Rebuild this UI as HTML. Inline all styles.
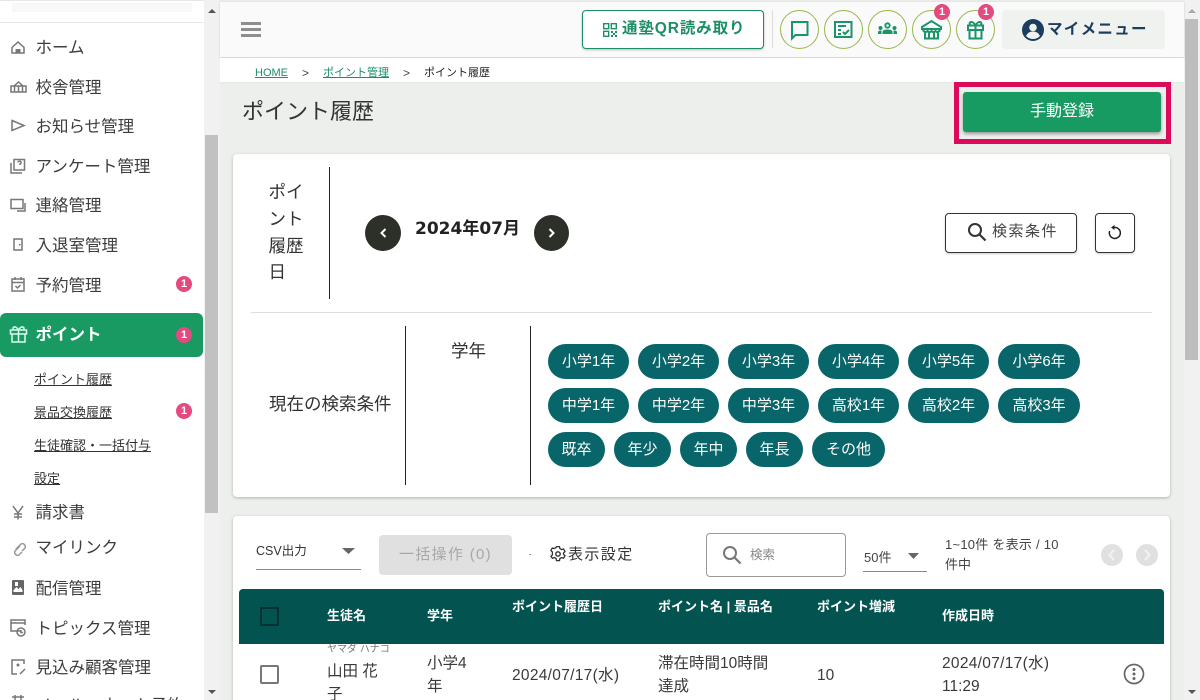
<!DOCTYPE html>
<html lang="ja"><head><meta charset="utf-8"><title>ポイント履歴</title>
<style>
html,body{margin:0;padding:0;width:1200px;height:700px;overflow:hidden;background:#edefec}
body{position:relative;font-family:"Liberation Sans","Noto Sans CJK JP",sans-serif;color:#333}
.t{position:absolute;white-space:nowrap;line-height:1}
.b{position:absolute;box-sizing:border-box}
svg{position:absolute;overflow:visible}
.n{font-size:16.5px;left:35.5px;color:#3d3d3d}
.s{font-size:13px;left:34px;color:#333;text-decoration:underline}
.bd{position:absolute;width:16px;height:16px;border-radius:50%;background:#e4497f;color:#fff;font-size:11px;font-weight:bold;line-height:16px;text-align:center}
.c{position:absolute;height:35px;border-radius:18px;background:#086569;color:#fff;font-size:15px;line-height:36px;text-align:center;white-space:nowrap}
.ci{position:absolute;top:10px;width:39px;height:39px;box-sizing:border-box;border-radius:50%;border:1px solid #96b84a;background:#fafafa}
.h{font-size:13px;font-weight:bold;color:#fff}
.r{font-size:15.5px;color:#3a3a3a}
.d{font-size:15.5px;color:#3a3a3a;letter-spacing:.3px}
.ic{fill:none;stroke:#777;stroke-width:1.5}
.gr{fill:none;stroke:#1b946a;stroke-width:2}
</style></head><body>

<!-- sidebar -->
<div class="b" style="left:0;top:0;width:204px;height:700px;background:#fff"></div>
<div class="b" style="left:0;top:0;width:220px;height:1px;background:#e6e6e6"></div>
<div class="b" style="left:12px;top:3px;width:180px;height:9px;background:#f8f8f8"></div>
<div class="b" style="left:0;top:22px;width:204px;height:1px;background:#e8e8e8"></div>
<div class="b" style="left:204px;top:0;width:16px;height:700px;background:#f1f1f1"></div>
<div class="b" style="left:205px;top:135px;width:13px;height:378px;background:#c1c1c1"></div>
<svg style="left:204px;top:0" width="16" height="700"><path d="M4 13l4-4 4 4z" fill="#555"/><path d="M4 690l4 4 4-4z" fill="#555"/></svg>

<svg style="left:0;top:0" width="30" height="700">
<path class="ic" d="M12 47.5l6-5.500 6 5.500v5.500h-12z"/><path d="M15.500 53v-4h5v4z" fill="#777"/>
<path class="ic" d="M11 92v-6h15v6zM14 86l4.500-4 4.500 4M18.500 86v6M14.500 86v6M22.500 86v6"/>
<path class="ic" d="M12 120.500l12 5-12 5z"/>
<path class="ic" d="M11 163v10h11"/><rect class="ic" x="14" y="159.500" width="10.500" height="10.500"/><path d="M18 162.500a1.500 1.500 0 1 1 2 1.500v1" class="ic" stroke-width="1"/>
<path class="ic" d="M11 199.500h12v9h-12zM25 203v8h-8"/>
<path class="ic" d="M14 239h8v11h-8z"/><path d="M19 244h1.500v1.500h-1.500z" fill="#777"/>
<rect class="ic" x="12" y="279" width="12" height="12"/><path class="ic" d="M12 282.500h12M15 277v3M21 277v3"/><path d="M15.500 286l2 2 3-3" class="ic" stroke-width="1"/>
<path class="ic" d="M13 506l5 7 5-7M18 513v6.500M14 514h8M14 517h8"/>
<path class="ic" d="M16 549l5-5a3 3 0 0 1 4 4l-3 3M20 546l-5 5a3 3 0 0 0 4 4l3-3" style="stroke:#999"/>
<rect x="12" y="580" width="12" height="15" fill="#666" rx="1"/><path d="M13.500 590l3-3 2 2 2-2 2 3v2h-9z" fill="#fff"/><rect x="15" y="582" width="3" height="4" fill="#fff"/>
<path class="ic" d="M21 631h-10v-11h14v5M11 623h14"/><circle class="ic" cx="21" cy="632" r="4"/><path class="ic" d="M21 630v2.500h2" stroke-width="1"/>
<path class="ic" d="M24 664v-4h-12v14h5M20 674l5-5"/><circle cx="18" cy="665" r="1.500" fill="#777"/>
<path class="ic" d="M12 697h12M15 695v5M21 695v5"/>
</svg>
<div class="t n" style="top:40px">ホーム</div>
<div class="t n" style="top:80px">校舎管理</div>
<div class="t n" style="top:119px">お知らせ管理</div>
<div class="t n" style="top:159px">アンケート管理</div>
<div class="t n" style="top:198px">連絡管理</div>
<div class="t n" style="top:238px">入退室管理</div>
<div class="t n" style="top:278px">予約管理</div>
<div class="bd" style="left:176px;top:276px">1</div>
<div class="b" style="left:0;top:313px;width:203px;height:44px;background:#189a62;border-radius:6px"></div>
<svg style="left:0;top:313px" width="30" height="44"><path d="M10.500 17h16v4h-16zM12 21h13v8h-13zM18.500 17v12M18.500 17c-3-5-7-3-5 0M18.500 17c3-5 7-3 5 0" fill="none" stroke="#d8fff0" stroke-width="1.500"/></svg>
<div class="t n" style="top:327px;color:#fff;font-weight:bold">ポイント</div>
<div class="bd" style="left:176px;top:327px">1</div>
<div class="t s" style="top:373px">ポイント履歴</div>
<div class="t s" style="top:406px">景品交換履歴</div>
<div class="bd" style="left:176px;top:403px">1</div>
<div class="t s" style="top:439px">生徒確認・一括付与</div>
<div class="t s" style="top:472px">設定</div>
<div class="t n" style="top:505px">請求書</div>
<div class="t n" style="top:540px">マイリンク</div>
<div class="t n" style="top:581px">配信管理</div>
<div class="t n" style="top:621px">トピックス管理</div>
<div class="t n" style="top:660px">見込み顧客管理</div>
<div class="t n" style="top:698px">メール・ネット予約</div>

<!-- right scrollbar -->
<div class="b" style="left:1184px;top:0;width:16px;height:700px;background:#f1f1f1"></div>
<div class="b" style="left:1185px;top:19px;width:13px;height:341px;background:#bdbdbd"></div>
<svg style="left:1184px;top:0" width="16" height="700"><path d="M4 13l4-4 4 4z" fill="#aaa"/><path d="M4 690l4 4 4-4z" fill="#555"/></svg>

<!-- header -->
<div class="b" style="left:220px;top:1px;width:964px;height:56px;background:#fafafa;border-top:1px solid #e6e6e6;box-shadow:0 1px 2px #ccc"></div>
<div class="b" style="left:220px;top:58px;width:964px;height:25px;background:#fff;border-bottom:1px solid #e6e8e5"></div>
<div class="b" style="left:241px;top:22px;width:20px;height:3px;background:#8e8e8e"></div>
<div class="b" style="left:241px;top:28px;width:20px;height:3px;background:#8e8e8e"></div>
<div class="b" style="left:241px;top:34px;width:20px;height:3px;background:#8e8e8e"></div>

<div class="b" style="left:582px;top:10px;width:182px;height:39px;border:1px solid #1b8e6a;border-radius:4px;background:#fff;box-shadow:0 1px 2px #bbb"></div>
<svg style="left:603px;top:23px" width="14" height="14"><path d="M.7.7h5v5h-5zM8.300.7h5v5h-5zM.7 8.300h5v5h-5z" fill="none" stroke="#1b8e6a" stroke-width="1.400"/><path d="M8 8h2v2h-2zM12 8h2v2h-2zM10 10h2v2h-2zM8 12h2v2h-2zM12 12h2v2h-2z" fill="#1b8e6a"/></svg>
<div class="t" style="left:622px;top:21px;font-size:15.500px;font-weight:bold;color:#1b8e63;letter-spacing:.9px">通塾QR読み取り</div>
<div class="b" style="left:772px;top:10px;width:1px;height:38px;background:#ddd"></div>
<div class="ci" style="left:780px"></div><div class="ci" style="left:824px"></div><div class="ci" style="left:868px"></div><div class="ci" style="left:912px"></div><div class="ci" style="left:956px"></div>
<svg style="left:780px;top:10px" width="220" height="40">
<path class="gr" d="M12 12h15.500v13h-12l-3.500 3.500z"/>
<rect class="gr" x="55" y="12" width="16.500" height="15" stroke-width="1.800"/><path class="gr" stroke-width="1.500" d="M58 16h8M58 20h3M58 24h3M63 22l2 2 4-4"/>
<circle cx="107.500" cy="15.500" r="2.200" fill="none" stroke="#1b946a" stroke-width="1.800"/><path d="M102.500 24v-2q0-2.500 5-2.500t5 2.500v2z" fill="#1b946a"/><circle cx="100.500" cy="18" r="2" fill="#1b946a"/><circle cx="114.500" cy="18" r="2" fill="#1b946a"/><path d="M98 24v-1.500q0-2 2.500-2h1v3.500zM117 24v-1.500q0-2-2.500-2h-1v3.500z" fill="#1b946a"/>
<path class="gr" d="M142 17l9.500-6 9.500 6v2h-19zM143.500 19v2q2 2 4 0 2 2 4 0 2 2 4 0 2 2 4 0v-2M145 22v6.500h13v-6.500M149 22v6.500M154 22v6.500"/>
<path class="gr" d="M188 15.500h15v4.500h-15zM189.500 20h12v8.500h-12zM195.500 15.500v13M195.500 15.500c-3-6-8-3-5 0M195.500 15.500c3-6 8-3 5 0"/>
</svg>
<div class="bd" style="left:934px;top:4px">1</div>
<div class="bd" style="left:978px;top:4px">1</div>
<div class="b" style="left:1002px;top:10px;width:163px;height:39px;background:#f0f2ef;border-radius:4px"></div>
<svg style="left:1022px;top:19px" width="22" height="22"><circle cx="11" cy="11" r="11" fill="#1b3e5e"/><circle cx="11" cy="8.500" r="3.800" fill="#f0f2ef"/><path d="M4 17q2-4.500 7-4.500t7 4.500q-3 3-7 3t-7-3z" fill="#f0f2ef"/></svg>
<div class="t" style="left:1047px;top:21.500px;font-size:15.500px;font-weight:bold;color:#1b3e5e;letter-spacing:1.300px">マイメニュー</div>

<!-- breadcrumb -->
<div class="t" style="left:255px;top:68px;font-size:11px;color:#1b8e6a;text-decoration:underline">HOME</div>
<div class="t" style="left:302px;top:67px;font-size:12px;color:#444">&gt;</div>
<div class="t" style="left:323px;top:68px;font-size:11px;color:#1b8e6a;text-decoration:underline">ポイント管理</div>
<div class="t" style="left:403px;top:67px;font-size:12px;color:#444">&gt;</div>
<div class="t" style="left:424px;top:68px;font-size:11px;color:#222">ポイント履歴</div>

<div class="t" style="left:242px;top:101px;font-size:22px;color:#333">ポイント履歴</div>

<div class="b" style="left:954px;top:82px;width:217px;height:62px;border:5px solid #db0a5b"></div>
<div class="b" style="left:963px;top:92px;width:198px;height:40px;background:#189b62;border-radius:3px;box-shadow:0 2px 3px #999;color:#fff;font-size:16px;line-height:39px;text-align:center">手動登録</div>

<!-- card 1 -->
<div class="b" style="left:233px;top:154px;width:937px;height:343px;background:#fff;border-radius:4px;box-shadow:0 1px 3px rgba(0,0,0,.25)"></div>
<div class="t" style="left:268.500px;top:184px;font-size:17.500px">ポイ</div>
<div class="t" style="left:268.500px;top:211px;font-size:17.500px">ント</div>
<div class="t" style="left:268.500px;top:238px;font-size:17.500px">履歴</div>
<div class="t" style="left:268.500px;top:264px;font-size:17.500px">日</div>
<div class="b" style="left:329px;top:167px;width:1px;height:132px;background:#222"></div>
<div class="b" style="left:365px;top:215px;width:36px;height:36px;border-radius:50%;background:#2c3029"></div>
<svg style="left:365px;top:215px" width="36" height="36"><path d="M20.500 14l-4 4 4 4" fill="none" stroke="#fff" stroke-width="2"/></svg>
<div class="t" style="left:415px;top:221px;font-family:'DejaVu Sans','Noto Sans CJK JP',sans-serif;font-size:17px;font-weight:bold;color:#222">2024年07月</div>
<div class="b" style="left:534px;top:215px;width:35px;height:36px;border-radius:50%;background:#2c3029"></div>
<svg style="left:534px;top:215px" width="36" height="36"><path d="M15.500 14l4 4-4 4" fill="none" stroke="#fff" stroke-width="2"/></svg>
<div class="b" style="left:945px;top:213px;width:132px;height:40px;border:1px solid #333;border-radius:4px;background:#fff;box-shadow:0 1px 2px #ccc"></div>
<svg style="left:967px;top:222px" width="20" height="20"><circle cx="8" cy="8" r="6" fill="none" stroke="#333" stroke-width="2"/><path d="M12.500 12.500l6 6" stroke="#333" stroke-width="2.200"/></svg>
<div class="t" style="left:992px;top:224px;font-size:15px;color:#444;letter-spacing:1.500px">検索条件</div>
<div class="b" style="left:1095px;top:213px;width:40px;height:40px;border:1px solid #333;border-radius:4px;background:#fff;box-shadow:0 1px 2px #ccc"></div>
<svg style="left:1095px;top:213px" width="40" height="40"><path d="M19 14.500a5.500 5.500 0 1 1-4.300 3.500" fill="none" stroke="#222" stroke-width="1.500"/><path d="M19.500 12l-3.500 2.500 3.500 2.500z" fill="#222"/></svg>
<div class="b" style="left:251px;top:312px;width:901px;height:1px;background:#ddd"></div>
<div class="t" style="left:269px;top:396px;font-size:17.500px">現在の検索条件</div>
<div class="b" style="left:405px;top:326px;width:1px;height:159px;background:#222"></div>
<div class="t" style="left:451px;top:343px;font-size:17.500px">学年</div>
<div class="b" style="left:530px;top:326px;width:1px;height:159px;background:#222"></div>

<div class="c" style="left:548px;top:344px;width:81px">小学1年</div>
<div class="c" style="left:638px;top:344px;width:81px">小学2年</div>
<div class="c" style="left:728px;top:344px;width:81px">小学3年</div>
<div class="c" style="left:818px;top:344px;width:81px">小学4年</div>
<div class="c" style="left:908px;top:344px;width:81px">小学5年</div>
<div class="c" style="left:998px;top:344px;width:82px">小学6年</div>
<div class="c" style="left:548px;top:388px;width:81px">中学1年</div>
<div class="c" style="left:638px;top:388px;width:81px">中学2年</div>
<div class="c" style="left:728px;top:388px;width:81px">中学3年</div>
<div class="c" style="left:818px;top:388px;width:81px">高校1年</div>
<div class="c" style="left:908px;top:388px;width:81px">高校2年</div>
<div class="c" style="left:998px;top:388px;width:82px">高校3年</div>
<div class="c" style="left:548px;top:432px;width:57px">既卒</div>
<div class="c" style="left:614px;top:432px;width:57px">年少</div>
<div class="c" style="left:680px;top:432px;width:57px">年中</div>
<div class="c" style="left:746px;top:432px;width:57px">年長</div>
<div class="c" style="left:812px;top:432px;width:73px">その他</div>

<!-- card 2 -->
<div class="b" style="left:233px;top:516px;width:937px;height:200px;background:#fff;border-radius:4px;box-shadow:0 1px 3px rgba(0,0,0,.25)"></div>
<div class="t" style="left:256px;top:545px;font-size:12.500px;color:#333">CSV出力</div>
<svg style="left:342px;top:548px" width="14" height="8"><path d="M0 0h13l-6.500 6z" fill="#666"/></svg>
<div class="b" style="left:256px;top:569px;width:105px;height:1px;background:#888"></div>
<div class="b" style="left:379px;top:535px;width:133px;height:40px;background:#e0e0e0;border-radius:4px;color:#a8a8a8;font-size:15px;line-height:39px;text-align:center;letter-spacing:1.300px">一括操作 (0)</div>
<div class="b" style="left:529px;top:554px;width:2px;height:1px;background:#999"></div>
<svg style="left:550px;top:546px" width="16" height="16"><circle cx="8" cy="8" r="2.200" fill="none" stroke="#333" stroke-width="1.400"/><path d="M6.500 1h3l.4 2 1.700 1 2-.6 1.400 2.600-1.500 1.300v1.400l1.500 1.300-1.400 2.600-2-.6-1.700 1-.4 2h-3l-.4-2-1.700-1-2 .6L.9 10.700l1.500-1.300V8 6.300L.9 5 2.300 2.400l2 .6 1.700-1z" fill="none" stroke="#333" stroke-width="1.300" transform="translate(0 -.4)"/></svg>
<div class="t" style="left:568px;top:547px;font-size:15px;color:#333;letter-spacing:1.400px">表示設定</div>
<div class="b" style="left:706px;top:533px;width:140px;height:44px;border:1px solid #999;border-radius:4px"></div>
<svg style="left:722px;top:545px" width="20" height="20"><circle cx="8" cy="8" r="6" fill="none" stroke="#777" stroke-width="2"/><path d="M12.500 12.500l6 6" stroke="#777" stroke-width="2.200"/></svg>
<div class="t" style="left:750px;top:549px;font-size:12.500px;color:#888">検索</div>
<div class="t" style="left:864px;top:551px;font-size:13px;color:#444">50件</div>
<svg style="left:908px;top:553px" width="12" height="8"><path d="M0 0h11l-5.500 6z" fill="#666"/></svg>
<div class="b" style="left:863px;top:571px;width:64px;height:1px;background:#888"></div>
<div class="t" style="left:945px;top:538px;font-size:13px;color:#444;letter-spacing:.25px">1~10件 を表示 / 10</div>
<div class="t" style="left:945px;top:558px;font-size:13px;color:#444">件中</div>
<div class="b" style="left:1101px;top:544px;width:22px;height:22px;border-radius:50%;background:#e0e0e0"></div>
<div class="b" style="left:1136px;top:544px;width:22px;height:22px;border-radius:50%;background:#e0e0e0"></div>
<svg style="left:1101px;top:544px" width="60" height="22"><path d="M13 6l-4.500 5 4.500 5M44 6l4.500 5-4.500 5" fill="none" stroke="#f2f2f2" stroke-width="2"/></svg>

<div class="b" style="left:239px;top:589px;width:925px;height:55px;background:#035350;border-radius:4px 4px 0 0"></div>
<div class="b" style="left:260px;top:607px;width:19px;height:19px;border:2px solid #033330"></div>
<div class="t h" style="left:327px;top:609px">生徒名</div>
<div class="t h" style="left:427px;top:609px">学年</div>
<div class="t h" style="left:512px;top:600px">ポイント履歴日</div>
<div class="t h" style="left:658px;top:600px">ポイント名 | 景品名</div>
<div class="t h" style="left:817px;top:600px">ポイント増減</div>
<div class="t h" style="left:942px;top:609px">作成日時</div>

<div class="b" style="left:260px;top:665px;width:19px;height:19px;border:2px solid #777;border-radius:2px"></div>
<div class="t" style="left:327px;top:645px;font-size:10px;color:#777">ヤマダ ハナコ</div>
<div class="t r" style="left:327px;top:664px">山田 花</div>
<div class="t r" style="left:327px;top:687px">子</div>
<div class="t r" style="left:427px;top:656px">小学4</div>
<div class="t r" style="left:427px;top:679px">年</div>
<div class="t d" style="left:512px;top:668px">2024/07/17(水)</div>
<div class="t r" style="left:658px;top:656px">滞在時間10時間</div>
<div class="t r" style="left:658px;top:679px">達成</div>
<div class="t r" style="left:817px;top:668px">10</div>
<div class="t d" style="left:942px;top:656px">2024/07/17(水)</div>
<div class="t r" style="left:942px;top:679px">11:29</div>
<svg style="left:1123px;top:663px" width="22" height="22"><circle cx="11" cy="11" r="9.500" fill="none" stroke="#666" stroke-width="1.700"/><circle cx="11" cy="6.500" r="1.500" fill="#666"/><circle cx="11" cy="11" r="1.500" fill="#666"/><circle cx="11" cy="15.500" r="1.500" fill="#666"/></svg>
</body></html>
